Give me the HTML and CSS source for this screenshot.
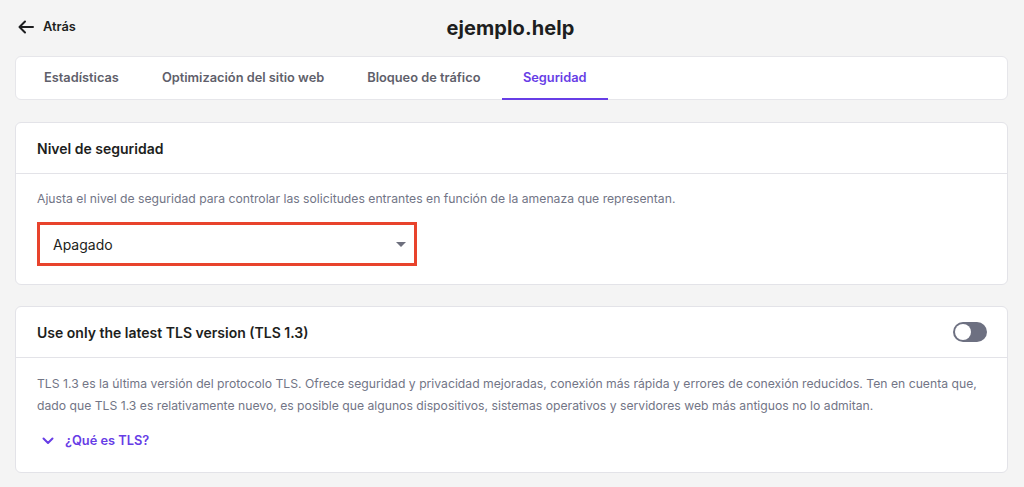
FILE: index.html
```html
<!DOCTYPE html>
<html lang="es">
<head>
<meta charset="utf-8">
<link rel="stylesheet" href="styles.css">
</head>
<body>
<div class="page">
  <header class="topbar">
    <a class="back" href="#">
      <svg width="16" height="14" viewBox="0 0 16 14" fill="none" stroke="#1d1e20" stroke-width="2" stroke-linecap="round" stroke-linejoin="round"><path d="M15 7H2M7 1.5L1.5 7 7 12.5"/></svg>
      <span>Atrás</span>
    </a>
    <h1 class="title">ejemplo.help</h1>
  </header>
  <nav class="tabs">
    <a class="tab" href="#">Estadísticas</a>
    <a class="tab" href="#">Optimización del sitio web</a>
    <a class="tab" href="#">Bloqueo de tráfico</a>
    <a class="tab active" href="#">Seguridad</a>
  </nav>
  <section class="card">
    <div class="card-head"><h2>Nivel de seguridad</h2></div>
    <div class="card-body">
      <p class="desc">Ajusta el nivel de seguridad para controlar las solicitudes entrantes en función de la amenaza que representan.</p>
      <div class="select">
        <span>Apagado</span>
        <span class="caret"></span>
      </div>
    </div>
  </section>
  <section class="card">
    <div class="card-head row">
      <h2>Use only the latest TLS version (TLS 1.3)</h2>
      <span class="toggle"><span class="knob"></span></span>
    </div>
    <div class="card-body tall">
      <p class="desc long">TLS 1.3 es la última versión del protocolo TLS. Ofrece seguridad y privacidad mejoradas, conexión más rápida y errores de conexión reducidos. Ten en cuenta que, dado que TLS 1.3 es relativamente nuevo, es posible que algunos dispositivos, sistemas operativos y servidores web más antiguos no lo admitan.</p>
      <a class="more" href="#">
        <svg width="12" height="8" viewBox="0 0 12 8" fill="none" stroke="#673de6" stroke-width="2" stroke-linecap="round" stroke-linejoin="round"><path d="M1.5 1.5L6 6l4.5-4.5"/></svg>
        <span>¿Qué es TLS?</span>
      </a>
    </div>
  </section>
</div>
</body>
</html>
```
FILE: styles.css
```css
* { box-sizing: border-box; }
html, body { margin: 0; padding: 0; }
body {
  background: #f4f4f4;
  font-family: "Inter", "DejaVu Sans", sans-serif;
  color: #1d1e20;
  width: 1024px;
  height: 487px;
  overflow: hidden;
}
.page {
  padding: 0 16px 0 15px;
}
.topbar {
  height: 56px;
  display: flex;
  align-items: center;
  justify-content: center;
  position: relative;
}
.back {
  position: absolute;
  left: 3px;
  top: 19px;
  display: flex;
  align-items: center;
  gap: 9px;
  text-decoration: none;
  color: #1d1e20;
  font-size: 12.8px;
  font-weight: 600;
}
.title {
  margin: 0;
  font-size: 20px;
  font-weight: 700;
  letter-spacing: 0.1px;
  position: relative;
  left: -1px;
}
.tabs {
  height: 44px;
  background: #fff;
  border: 1px solid #e6e6ea;
  border-radius: 6px;
  display: flex;
  padding-left: 8px;
  margin-bottom: 22px;
}
.tab {
  display: flex;
  align-items: center;
  font-size: 12.8px;
  font-weight: 600;
  color: #5f5f6b;
  text-decoration: none;
  height: 43px;
  border-bottom: 2px solid transparent;
  padding: 0 21.5px;
}
.tab:first-child { padding-left: 20px; }
.tab.active {
  color: #673de6;
  border-bottom-color: #673de6;
  padding: 0 21px;
}
.card {
  background: #fff;
  border: 1px solid #e3e3e8;
  border-radius: 6px;
  margin-bottom: 21px;
}
.card-head {
  height: 51px;
  padding: 0 21px;
  display: flex;
  align-items: center;
  border-bottom: 1px solid #e3e3e8;
}
.card-head.row { justify-content: space-between; padding-right: 20px; }
.card-head h2 {
  margin: 0;
  font-size: 14px;
  font-weight: 600;
  color: #1d1e20;
}
.card-body {
  padding: 15px 21px 18px;
}
.card-body.tall { padding-bottom: 24px; }
.desc {
  margin: 0;
  font-size: 12.2px;
  line-height: 20px;
  color: #727586;
}
.desc.long { line-height: 22px; }
.select {
  margin-top: 13px;
  width: 380px;
  height: 44px;
  border: 3px solid #e8432c;
  display: flex;
  align-items: center;
  justify-content: space-between;
  padding: 0 8px 0 13px;
  font-size: 14px;
  color: #1d1e20;
}
.caret {
  width: 0;
  height: 0;
  border-left: 5px solid transparent;
  border-right: 5px solid transparent;
  border-top: 5px solid #6d6f7d;
}
.toggle {
  width: 34px;
  height: 20px;
  border-radius: 10px;
  background: #6d7081;
  position: relative;
}
.knob {
  position: absolute;
  left: 2px;
  top: 2px;
  width: 16px;
  height: 16px;
  border-radius: 50%;
  background: #fff;
}
.more {
  margin-top: 16px;
  display: flex;
  align-items: center;
  gap: 11px;
  padding-left: 5px;
  text-decoration: none;
  color: #673de6;
  font-size: 12.8px;
  font-weight: 600;
}
```
